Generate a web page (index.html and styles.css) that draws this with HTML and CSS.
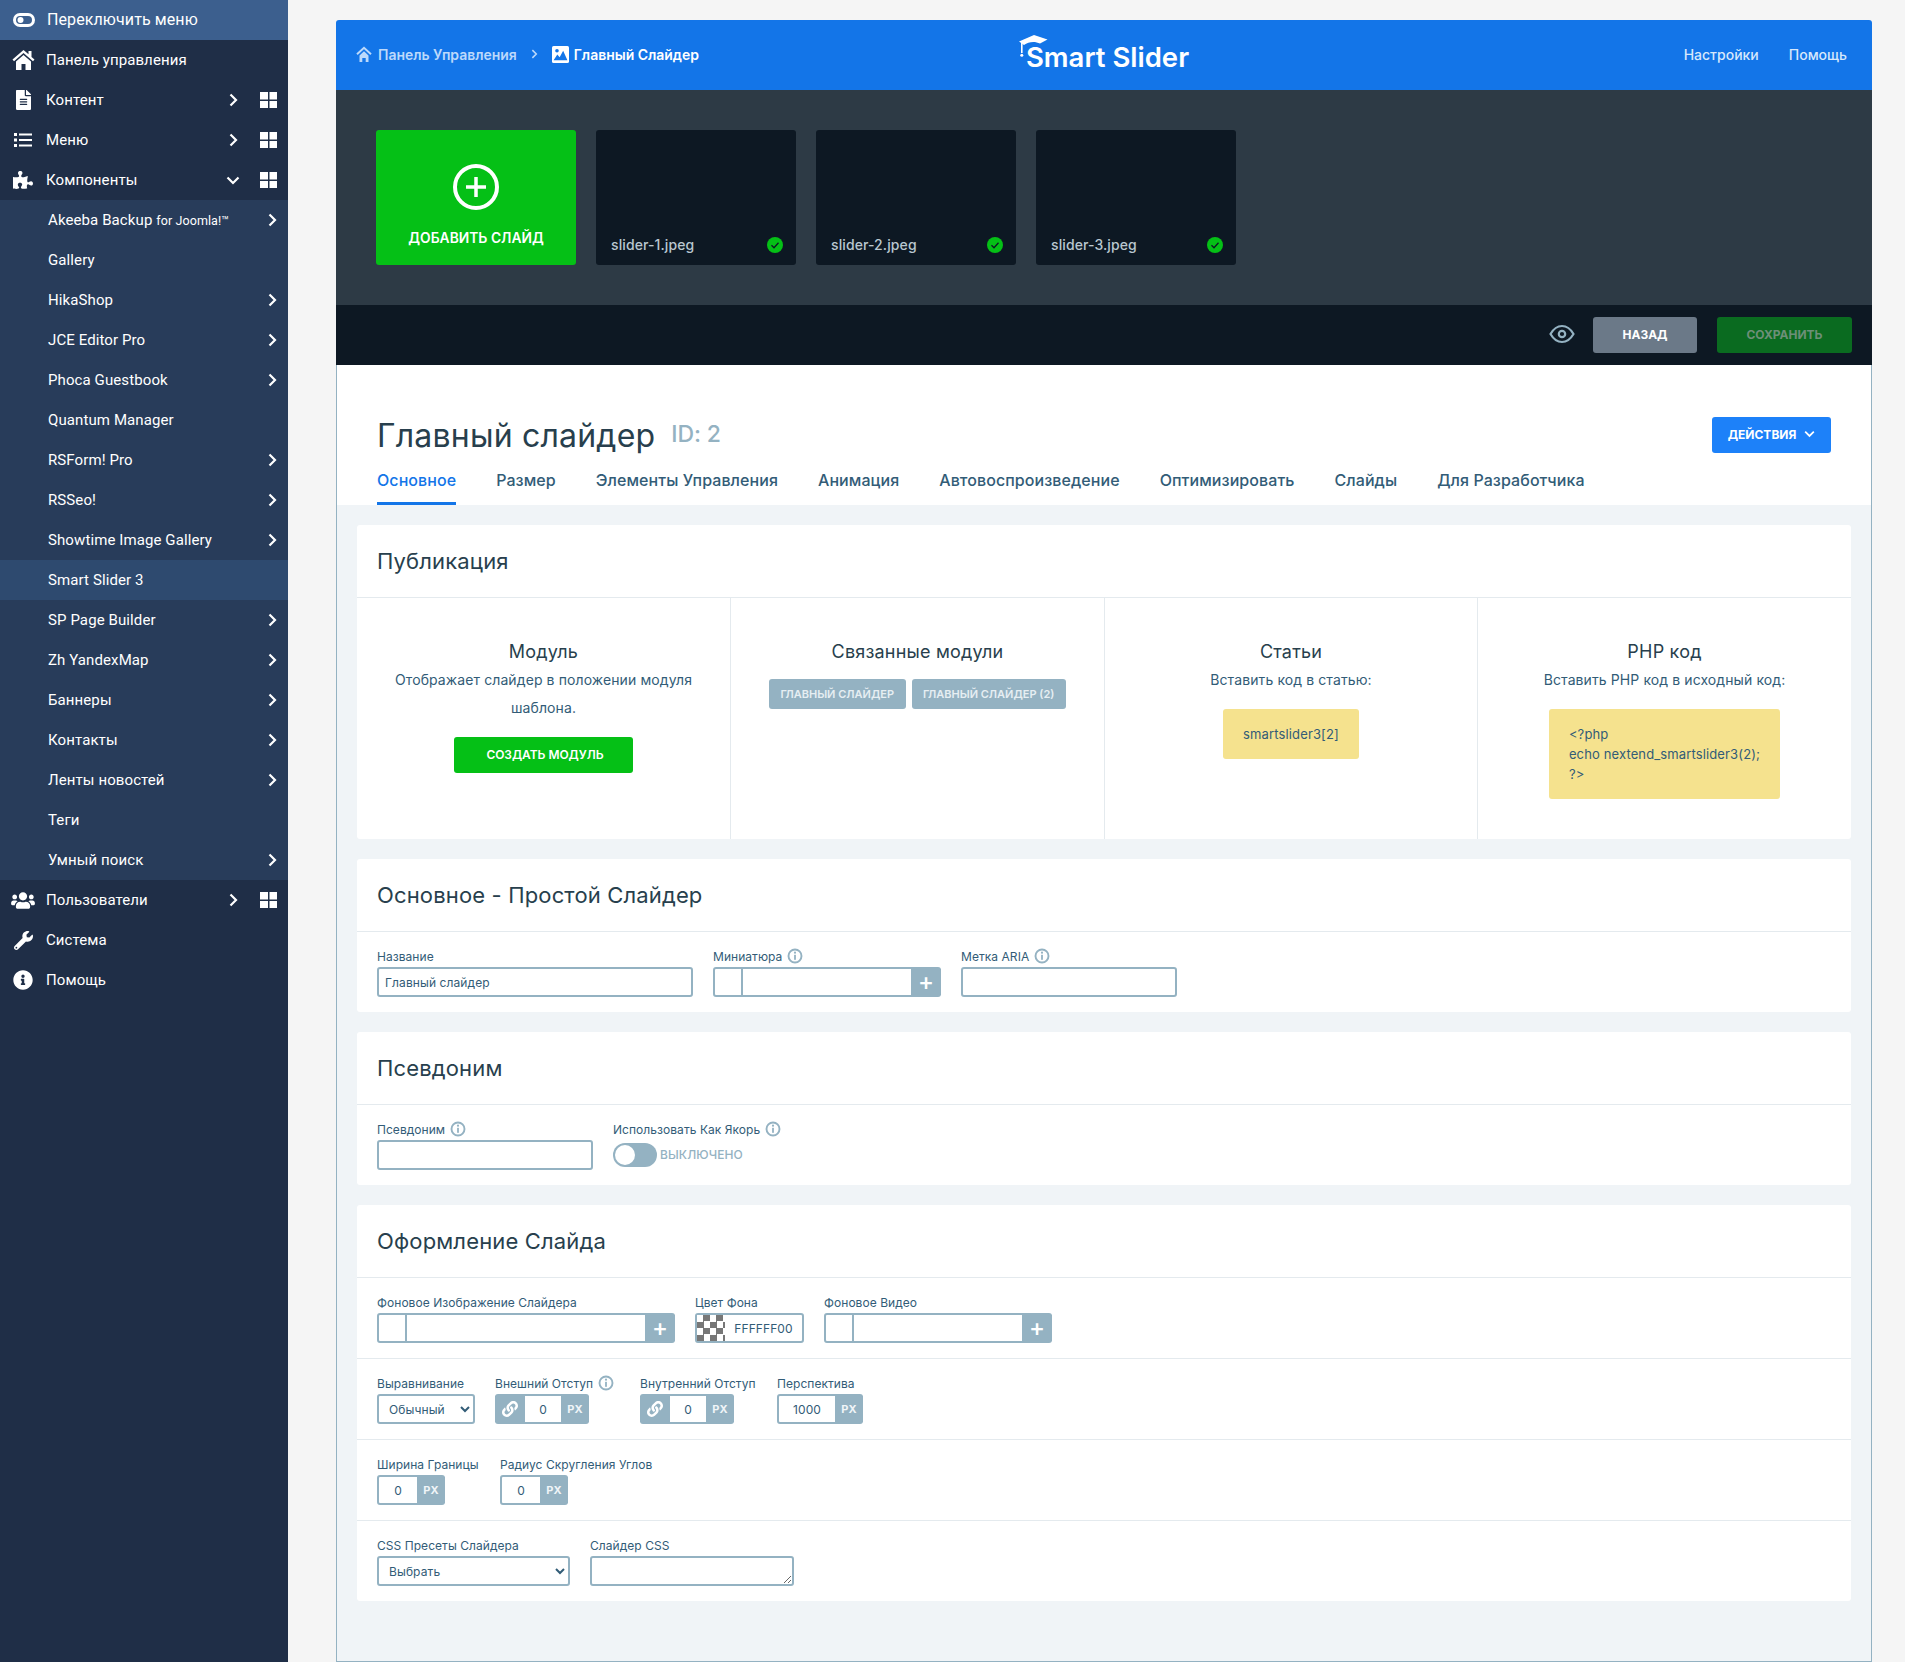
FILE: index.html
```html
<!DOCTYPE html>
<html lang="ru">
<head>
    <meta charset="UTF-8">
    <title>Главный слайдер - Smart Slider</title>
    <link rel="stylesheet" href="styles.css">
</head>
<body>
    <svg class="sprite" xmlns="http://www.w3.org/2000/svg">
        <symbol id="i-home" viewBox="0 0 23 20"><path d="M.5 9.500L11.500 0l5 4.300V1h3v6l3 2.500-1.500 1.700L11.500 3 2 11.200z"/><path d="M4 11.500l7.500-6.500 7.500 6.500V20h-5.500v-6h-4v6H4z"/></symbol>
        <symbol id="i-file" viewBox="0 0 384 512"><path d="M224 136V0H24C10.7 0 0 10.7 0 24v464c0 13.3 10.7 24 24 24h336c13.3 0 24-10.7 24-24V160H248c-13.2 0-24-10.8-24-24zm64 236c0 6.6-5.4 12-12 12H108c-6.6 0-12-5.4-12-12v-8c0-6.6 5.4-12 12-12h168c6.6 0 12 5.4 12 12v8zm0-64c0 6.6-5.4 12-12 12H108c-6.6 0-12-5.4-12-12v-8c0-6.6 5.4-12 12-12h168c6.6 0 12 5.4 12 12v8zm0-72v8c0 6.6-5.4 12-12 12H108c-6.6 0-12-5.4-12-12v-8c0-6.6 5.4-12 12-12h168c6.6 0 12 5.4 12 12zm96-114.1v6.1H256V0h6.1c6.4 0 12.5 2.5 17 7l97.9 98c4.5 4.5 7 10.6 7 16.9z"/></symbol>
        <symbol id="i-list" viewBox="0 0 18 16"><rect x="0" y="1" width="3" height="3"/><rect x="0" y="6.5" width="3" height="3"/><rect x="0" y="12" width="3" height="3"/><rect x="5" y="1.5" width="13" height="2"/><rect x="5" y="7" width="13" height="2"/><rect x="5" y="12.500" width="13" height="2"/></symbol>
        <symbol id="i-puzzle" viewBox="0 0 576 512"><path d="M519.442 288.651c-41.519 0-59.5 31.593-82.058 31.593C377.409 320.244 432 144 432 144s-196.288 80-196.288-3.297c0-35.827 36.288-46.25 36.288-85.985C272 19.216 243.885 0 210.539 0c-34.654 0-66.366 18.891-66.366 56.346 0 41.364 31.711 59.277 31.711 81.75C175.885 207.719 0 166.758 0 166.758v333.237s178.635 41.047 178.635-28.662c0-22.473-40-40.107-40-81.471 0-37.456 29.25-56.346 63.577-56.346 33.673 0 61.788 19.216 61.788 54.717 0 39.735-36.288 50.158-36.288 85.985 0 60.803 129.675 25.73 181.23 25.73 0 0-34.725-120.101 25.827-120.101 35.962 0 46.423 36.152 86.308 36.152C556.712 416 576 387.99 576 354.443c0-34.199-18.962-65.792-56.558-65.792z"/></symbol>
        <symbol id="i-users" viewBox="0 0 640 512"><path d="M96 224c35.3 0 64-28.7 64-64s-28.7-64-64-64-64 28.7-64 64 28.7 64 64 64zm448 0c35.3 0 64-28.7 64-64s-28.7-64-64-64-64 28.7-64 64 28.7 64 64 64zm32 32h-64c-17.6 0-33.5 7.1-45.1 18.6 40.3 22.1 68.9 62 75.1 109.4h66c17.7 0 32-14.3 32-32v-32c0-35.3-28.7-64-64-64zm-256 0c61.9 0 112-50.1 112-112S381.9 32 320 32 208 82.1 208 144s50.1 112 112 112zm76.8 32h-8.3c-20.8 10-43.9 16-68.5 16s-47.6-6-68.5-16h-8.3C179.6 288 128 339.6 128 403.2V432c0 26.5 21.5 48 48 48h288c26.5 0 48-21.5 48-48v-28.8c0-63.6-51.6-115.2-115.2-115.2zm-223.7-13.4C161.5 263.1 145.6 256 128 256H64c-35.3 0-64 28.7-64 64v32c0 17.7 14.3 32 32 32h65.9c6.3-47.4 34.9-87.3 75.2-109.4z"/></symbol>
        <symbol id="i-wrench" viewBox="0 0 512 512"><path d="M507.73 109.1c-2.24-9.03-13.54-12.09-20.12-5.51l-74.36 74.36-67.88-11.31-11.31-67.88 74.36-74.36c6.62-6.62 3.43-17.9-5.66-20.16-47.38-11.74-99.55.91-136.58 37.93-39.64 39.64-50.55 97.1-34.05 147.2L18.74 402.76c-24.99 24.99-24.99 65.51 0 90.5 24.99 24.99 65.51 24.99 90.5 0l213.21-213.21c50.12 16.71 107.47 5.68 147.37-34.22 37.07-37.07 49.7-89.32 37.91-136.73zM64 472c-13.25 0-24-10.75-24-24 0-13.26 10.75-24 24-24s24 10.74 24 24c0 13.25-10.75 24-24 24z"/></symbol>
        <symbol id="i-info" viewBox="0 0 512 512"><path d="M256 8C119.043 8 8 119.083 8 256c0 136.997 111.043 248 248 248s248-111.003 248-248C504 119.083 392.957 8 256 8zm0 110c23.196 0 42 18.804 42 42s-18.804 42-42 42-42-18.804-42-42 18.804-42 42-42zm56 254c0 6.627-5.373 12-12 12h-88c-6.627 0-12-5.373-12-12v-24c0-6.627 5.373-12 12-12h12v-64h-12c-6.627 0-12-5.373-12-12v-24c0-6.627 5.373-12 12-12h64c6.627 0 12 5.373 12 12v100h12c6.627 0 12 5.373 12 12v24z"/></symbol>
        <symbol id="i-grid" viewBox="0 0 17 16"><rect width="8" height="7.500"/><rect x="9.500" width="7.500" height="7.500"/><rect y="9" width="8" height="7"/><rect x="9.500" y="9" width="7.500" height="7"/></symbol>
        <symbol id="i-right" viewBox="0 0 9 14"><path d="M1.500 1.500L7 7l-5.500 5.500" fill="none" stroke="currentColor" stroke-width="2.200"/></symbol>
        <symbol id="i-down" viewBox="0 0 14 9"><path d="M1.500 1.500L7 7l5.500-5.500" fill="none" stroke="currentColor" stroke-width="2.200"/></symbol>
        <symbol id="i-tip" viewBox="0 0 16 16"><circle cx="8" cy="8" r="6.500" fill="none" stroke="currentColor" stroke-width="1.900"/><rect x="7.100" y="6.800" width="1.800" height="5"/><circle cx="8" cy="4.700" r="1.100"/></symbol>
        <symbol id="i-link" viewBox="0 0 512 512"><path d="M326.612 185.391c59.747 59.809 58.927 155.698.36 214.59-.11.12-.24.25-.36.37l-67.2 67.2c-59.27 59.27-155.699 59.262-214.96 0-59.27-59.26-59.27-155.7 0-214.96l37.106-37.106c9.84-9.84 26.786-3.3 27.294 10.606.648 17.722 3.826 35.527 9.69 52.721 1.986 5.822.567 12.262-3.783 16.612l-13.087 13.087c-28.026 28.026-28.905 73.66-1.155 101.96 28.024 28.579 74.086 28.749 102.325.51l67.2-67.19c28.191-28.191 28.073-73.757 0-101.83-3.701-3.694-7.429-6.564-10.341-8.569a16.037 16.037 0 0 1-6.947-12.606c-.396-10.567 3.348-21.456 11.698-29.806l21.054-21.055c5.521-5.521 14.182-6.199 20.584-1.731a152.482 152.482 0 0 1 20.522 17.197zM467.547 44.449c-59.261-59.262-155.69-59.27-214.96 0l-67.2 67.2c-.12.12-.25.25-.36.37-58.566 58.892-59.387 154.781.36 214.59a152.454 152.454 0 0 0 20.521 17.196c6.402 4.468 15.064 3.789 20.584-1.731l21.054-21.055c8.35-8.35 12.094-19.239 11.698-29.806a16.037 16.037 0 0 0-6.947-12.606c-2.912-2.005-6.64-4.875-10.341-8.569-28.073-28.073-28.191-73.639 0-101.83l67.2-67.19c28.239-28.239 74.3-28.069 102.325.51 27.75 28.3 26.872 73.934-1.155 101.96l-13.087 13.087c-4.35 4.35-5.769 10.79-3.783 16.612 5.864 17.194 9.042 34.999 9.69 52.721.509 13.906 17.454 20.446 27.294 10.606l37.106-37.106c59.271-59.259 59.271-155.699.001-214.959z"/></symbol>
    </svg>

    <div class="layout">
        <nav class="sidebar">
            <a class="menu-toggle">
                <span class="menu-icon">
                    <svg class="toggle-icon" viewBox="0 0 22 14"><path fill-rule="evenodd" d="M7 0h8a7 7 0 0 1 0 14H7A7 7 0 0 1 7 0zm0 3a4 4 0 0 0 0 8h8a4 4 0 0 0 0-8H7z"/><circle cx="7.500" cy="7" r="3"/></svg>
                </span>
                Переключить меню
            </a>
            <a class="menu-item"><span class="menu-icon"><svg class="ico-home"><use href="#i-home"/></svg></span><span class="menu-text">Панель управления</span></a>
            <a class="menu-item"><span class="menu-icon"><svg class="ico-file"><use href="#i-file"/></svg></span><span class="menu-text">Контент</span><svg class="arrow"><use href="#i-right"/></svg><svg class="grid"><use href="#i-grid"/></svg></a>
            <a class="menu-item"><span class="menu-icon"><svg class="ico-list"><use href="#i-list"/></svg></span><span class="menu-text">Меню</span><svg class="arrow"><use href="#i-right"/></svg><svg class="grid"><use href="#i-grid"/></svg></a>
            <a class="menu-item"><span class="menu-icon"><svg class="ico-puzzle"><use href="#i-puzzle"/></svg></span><span class="menu-text">Компоненты</span><svg class="arrow-down"><use href="#i-down"/></svg><svg class="grid"><use href="#i-grid"/></svg></a>

            <div class="submenu">
                <a class="sub-item"><span>Akeeba Backup <small>for Joomla!™</small></span><svg class="arrow"><use href="#i-right"/></svg></a>
                <a class="sub-item"><span>Gallery</span></a>
                <a class="sub-item"><span>HikaShop</span><svg class="arrow"><use href="#i-right"/></svg></a>
                <a class="sub-item"><span>JCE Editor Pro</span><svg class="arrow"><use href="#i-right"/></svg></a>
                <a class="sub-item"><span>Phoca Guestbook</span><svg class="arrow"><use href="#i-right"/></svg></a>
                <a class="sub-item"><span>Quantum Manager</span></a>
                <a class="sub-item"><span>RSForm! Pro</span><svg class="arrow"><use href="#i-right"/></svg></a>
                <a class="sub-item"><span>RSSeo!</span><svg class="arrow"><use href="#i-right"/></svg></a>
                <a class="sub-item"><span>Showtime Image Gallery</span><svg class="arrow"><use href="#i-right"/></svg></a>
                <a class="sub-item active"><span>Smart Slider 3</span></a>
                <a class="sub-item"><span>SP Page Builder</span><svg class="arrow"><use href="#i-right"/></svg></a>
                <a class="sub-item"><span>Zh YandexMap</span><svg class="arrow"><use href="#i-right"/></svg></a>
                <a class="sub-item"><span>Баннеры</span><svg class="arrow"><use href="#i-right"/></svg></a>
                <a class="sub-item"><span>Контакты</span><svg class="arrow"><use href="#i-right"/></svg></a>
                <a class="sub-item"><span>Ленты новостей</span><svg class="arrow"><use href="#i-right"/></svg></a>
                <a class="sub-item"><span>Теги</span></a>
                <a class="sub-item"><span>Умный поиск</span><svg class="arrow"><use href="#i-right"/></svg></a>
            </div>

            <a class="menu-item"><span class="menu-icon"><svg class="ico-users"><use href="#i-users"/></svg></span><span class="menu-text">Пользователи</span><svg class="arrow"><use href="#i-right"/></svg><svg class="grid"><use href="#i-grid"/></svg></a>
            <a class="menu-item"><span class="menu-icon"><svg class="ico-wrench"><use href="#i-wrench"/></svg></span><span class="menu-text">Система</span></a>
            <a class="menu-item"><span class="menu-icon"><svg class="ico-info"><use href="#i-info"/></svg></span><span class="menu-text">Помощь</span></a>
        </nav>

        <main class="main">
            <header class="topbar">
                <div class="breadcrumb">
                    <a class="crumb"><svg class="crumb-home" viewBox="0 0 16 16"><path d="M1 8.300L8 1.800l7 6.500" fill="none" stroke="currentColor" stroke-width="2"/><path d="M3.500 9.500L8 5.300l4.500 4.200V16H9.700v-4H6.300v4H3.500z"/></svg>Панель Управления</a>
                    <svg class="crumb-sep"><use href="#i-right"/></svg>
                    <a class="crumb current"><svg class="crumb-image" viewBox="0 0 16 16"><rect width="16" height="16" rx="1.500" fill="#fff"/><circle cx="4.700" cy="4.500" r="1.700" fill="#1375e8"/><path d="M1.500 13.500L5 8l2.200 2.500L10.500 4.500l4 9z" fill="#1375e8"/></svg>Главный Слайдер</a>
                </div>
                <div class="logo">
                    <svg class="logo-cap" viewBox="0 0 29 23"><path d="M0 6.500L15 0l13.500 4.500-7.500 4C16 6 9.500 6.500 5 10z"/><rect x="2" y="8" width="1.600" height="10"/><circle cx="2.800" cy="20.200" r="1.500"/></svg>
                    <span>Smart Slider</span>
                </div>
                <div class="top-links">
                    <a>Настройки</a>
                    <a>Помощь</a>
                </div>
            </header>

            <section class="slides-bar">
                <a class="slide-add">
                    <svg class="plus-circle" viewBox="0 0 46 46"><circle cx="23" cy="23" r="21" fill="none" stroke="currentColor" stroke-width="4"/><path d="M13 23h20M23 13v20" fill="none" stroke="currentColor" stroke-width="3.500"/></svg>
                    <span>Добавить слайд</span>
                </a>
                <div class="slide"><span>slider-1.jpeg</span><svg class="check" viewBox="0 0 16 16"><circle cx="8" cy="8" r="8"/><path d="M4.500 8.200l2.500 2.500 4.500-5" fill="none" stroke="#0d1823" stroke-width="1.300"/></svg></div>
                <div class="slide"><span>slider-2.jpeg</span><svg class="check" viewBox="0 0 16 16"><circle cx="8" cy="8" r="8"/><path d="M4.500 8.200l2.500 2.500 4.500-5" fill="none" stroke="#0d1823" stroke-width="1.300"/></svg></div>
                <div class="slide"><span>slider-3.jpeg</span><svg class="check" viewBox="0 0 16 16"><circle cx="8" cy="8" r="8"/><path d="M4.500 8.200l2.500 2.500 4.500-5" fill="none" stroke="#0d1823" stroke-width="1.300"/></svg></div>
            </section>

            <div class="action-bar">
                <svg class="eye" viewBox="0 0 26 20"><path d="M1.500 10C4.500 4.800 8.500 2 13 2s8.500 2.800 11.500 8c-3 5.200-7 8-11.500 8S4.500 15.200 1.500 10z" fill="none" stroke="currentColor" stroke-width="2.200"/><circle cx="13" cy="10" r="3.200" fill="none" stroke="currentColor" stroke-width="2.200"/></svg>
                <a class="btn btn-back">Назад</a>
                <a class="btn btn-save">Сохранить</a>
            </div>

            <div class="content">
                <div class="page-head">
                    <div class="title-row">
                        <h1>Главный слайдер <span class="slider-id">ID: 2</span></h1>
                        <a class="btn btn-actions">Действия <svg><use href="#i-down"/></svg></a>
                    </div>
                    <div class="tabs">
                        <a class="tab active">Основное</a>
                        <a class="tab">Размер</a>
                        <a class="tab">Элементы Управления</a>
                        <a class="tab">Анимация</a>
                        <a class="tab">Автовоспроизведение</a>
                        <a class="tab">Оптимизировать</a>
                        <a class="tab">Слайды</a>
                        <a class="tab">Для Разработчика</a>
                    </div>
                </div>

                <div class="panels">
                    <section class="panel">
                        <h2 class="panel-title">Публикация</h2>
                        <div class="publish">
                            <div class="publish-col">
                                <h3>Модуль</h3>
                                <p>Отображает слайдер в положении модуля шаблона.</p>
                                <a class="btn btn-green">Создать модуль</a>
                            </div>
                            <div class="publish-col">
                                <h3>Связанные модули</h3>
                                <div class="tags">
                                    <a class="tag">Главный слайдер</a>
                                    <a class="tag">Главный слайдер (2)</a>
                                </div>
                            </div>
                            <div class="publish-col">
                                <h3>Статьи</h3>
                                <p class="one-line">Вставить код в статью:</p>
                                <div class="code">smartslider3[2]</div>
                            </div>
                            <div class="publish-col">
                                <h3>PHP код</h3>
                                <p class="one-line">Вставить PHP код в исходный код:</p>
                                <div class="code">&lt;?php<br>echo nextend_smartslider3(2);<br>?&gt;</div>
                            </div>
                        </div>
                    </section>

                    <section class="panel">
                        <h2 class="panel-title">Основное - Простой Слайдер</h2>
                        <div class="form-row">
                            <div class="field w-316">
                                <label>Название</label>
                                <input class="input" type="text" value="Главный слайдер">
                            </div>
                            <div class="field w-228">
                                <label>Миниатюра <svg class="tip"><use href="#i-tip"/></svg></label>
                                <div class="picker"><span class="picker-thumb"></span><span class="picker-path"></span><span class="picker-add">+</span></div>
                            </div>
                            <div class="field w-216">
                                <label>Метка ARIA <svg class="tip"><use href="#i-tip"/></svg></label>
                                <input class="input" type="text">
                            </div>
                        </div>
                    </section>

                    <section class="panel">
                        <h2 class="panel-title">Псевдоним</h2>
                        <div class="form-row">
                            <div class="field w-216">
                                <label>Псевдоним <svg class="tip"><use href="#i-tip"/></svg></label>
                                <input class="input" type="text">
                            </div>
                            <div class="field">
                                <label>Использовать Как Якорь <svg class="tip"><use href="#i-tip"/></svg></label>
                                <div class="switch-line"><span class="switch"></span><span class="switch-text">Выключено</span></div>
                            </div>
                        </div>
                    </section>

                    <section class="panel">
                        <h2 class="panel-title">Оформление Слайда</h2>
                        <div class="form-row">
                            <div class="field w-298">
                                <label>Фоновое Изображение Слайдера</label>
                                <div class="picker"><span class="picker-thumb"></span><span class="picker-path"></span><span class="picker-add">+</span></div>
                            </div>
                            <div class="field w-109">
                                <label>Цвет Фона</label>
                                <div class="color"><span class="color-swatch"></span><span class="color-value">FFFFFF00</span></div>
                            </div>
                            <div class="field w-228">
                                <label>Фоновое Видео</label>
                                <div class="picker"><span class="picker-thumb"></span><span class="picker-path"></span><span class="picker-add">+</span></div>
                            </div>
                        </div>
                        <div class="form-row">
                            <div class="field w-98">
                                <label>Выравнивание</label>
                                <select class="input select"><option>Обычный</option></select>
                            </div>
                            <div class="field w-94">
                                <label class="nowrap">Внешний Отступ <svg class="tip"><use href="#i-tip"/></svg></label>
                                <div class="unit-box"><span class="unit-link"><svg><use href="#i-link"/></svg></span><span class="unit-value">0</span><span class="unit-name">px</span></div>
                            </div>
                            <div class="field w-94 after-tip">
                                <label class="nowrap">Внутренний Отступ</label>
                                <div class="unit-box"><span class="unit-link"><svg><use href="#i-link"/></svg></span><span class="unit-value">0</span><span class="unit-name">px</span></div>
                            </div>
                            <div class="field w-86 after-label">
                                <label>Перспектива</label>
                                <div class="unit-box"><span class="unit-value">1000</span><span class="unit-name">px</span></div>
                            </div>
                        </div>
                        <div class="form-row">
                            <div class="field w-68 after-wide">
                                <label class="nowrap">Ширина Границы</label>
                                <div class="unit-box"><span class="unit-value">0</span><span class="unit-name">px</span></div>
                            </div>
                            <div class="field w-68">
                                <label class="nowrap">Радиус Скругления Углов</label>
                                <div class="unit-box"><span class="unit-value">0</span><span class="unit-name">px</span></div>
                            </div>
                        </div>
                        <div class="form-row">
                            <div class="field w-193">
                                <label>CSS Пресеты Слайдера</label>
                                <select class="input select"><option>Выбрать</option></select>
                            </div>
                            <div class="field w-204">
                                <label>Слайдер CSS</label>
                                <textarea class="input area"></textarea>
                            </div>
                        </div>
                    </section>
                </div>
            </div>
        </main>
    </div>
</body>
</html>
```

FILE: styles.css
```css
* {
    box-sizing: border-box;
}
body {
    margin: 0;
    background-color: #f5f5f5;
    font-family: Inter, "Liberation Sans", sans-serif;
    color: #283f4d;
    letter-spacing: 0.1px;
}
a {
    text-decoration: none;
    color: inherit;
}
.sprite {
    display: none;
}
.layout {
    display: flex;
    min-height: 1662px;
}

/* sidebar */
.sidebar {
    width: 288px;
    flex-shrink: 0;
    background-color: #1f2e47;
    color: #fff;
    font-family: Roboto, "Liberation Sans", sans-serif;
    font-size: 15px;
}
.sidebar svg {
    fill: currentColor;
}
.menu-toggle,
.menu-item,
.sub-item {
    display: flex;
    align-items: center;
    height: 40px;
}
.menu-toggle {
    padding-bottom: 1px;
    background-color: #3c5f8e;
    font-size: 16px;
}
.menu-icon {
    display: flex;
    justify-content: center;
    width: 46px;
    flex-shrink: 0;
}
.menu-toggle .menu-icon {
    width: 47px;
}
.toggle-icon {
    width: 22px;
    height: 14px;
}
.ico-home { width: 23px; height: 20px; }
.ico-file { width: 15px; height: 20px; }
.ico-list { width: 18px; height: 16px; }
.ico-puzzle { width: 20px; height: 18px; }
.ico-users { width: 24px; height: 19px; }
.ico-wrench { width: 19px; height: 19px; }
.ico-info { width: 20px; height: 20px; }
.menu-text {
    flex: 1;
}
.menu-item .arrow {
    width: 9px;
    height: 14px;
    margin-right: 22px;
}
.arrow-down {
    width: 14px;
    height: 9px;
    margin-right: 20px;
}
.grid {
    width: 17px;
    height: 16px;
    margin-right: 11px;
}
.submenu {
    background-color: #283c5a;
}
.sub-item {
    justify-content: space-between;
    padding: 0 11px 0 48px;
}
.sub-item .arrow {
    width: 9px;
    height: 14px;
}
.sub-item small {
    font-size: 12.500px;
}
.sub-item.active {
    background-color: #2e4a6f;
}

/* top of the slider page */
.main {
    width: 1536px;
    margin: 20px 33px 0 48px;
    display: flex;
    flex-direction: column;
}
.topbar {
    display: grid;
    grid-template-columns: 1fr auto 1fr;
    align-items: center;
    height: 70px;
    padding: 0 25px 0 20px;
    background-color: #1375e8;
    border-radius: 3px 3px 0 0;
    color: #fff;
    font-size: 14px;
    font-weight: 500;
    letter-spacing: 0;
}
.breadcrumb,
.crumb {
    display: flex;
    align-items: center;
}
.breadcrumb {
    padding-bottom: 2px;
}
.crumb {
    color: #bcd9fb;
    font-weight: 600;
    letter-spacing: -0.03px;
}
.crumb.current {
    color: #fff;
}
.crumb svg {
    fill: currentColor;
}
.crumb-home {
    width: 16px;
    height: 16px;
    margin-right: 6px;
}
.crumb-image {
    width: 17px;
    height: 17px;
    margin-right: 5px;
}
.crumb-sep {
    width: 7px;
    height: 10px;
    margin: 0 14px;
    color: #bcd9fb;
}
.logo {
    position: relative;
    margin: 4px 0 0 5px;
    padding-left: 7px;
    font-size: 27.500px;
    font-weight: 600;
    line-height: 36px;
}
.logo-cap {
    position: absolute;
    left: 0;
    top: -4px;
    width: 29px;
    height: 23px;
    fill: #fff;
}
.top-links {
    justify-self: end;
    display: flex;
    gap: 30px;
    padding-bottom: 2px;
    color: #d7e8fc;
}
.slides-bar {
    display: flex;
    gap: 20px;
    height: 215px;
    padding: 40px;
    background-color: #2d3a45;
}
.slide-add,
.slide {
    width: 200px;
    height: 135px;
    border-radius: 3px;
}
.slide-add {
    display: flex;
    flex-direction: column;
    align-items: center;
    padding-top: 34px;
    background-color: #05c016;
    color: #fff;
    font-size: 13.800px;
    font-weight: 600;
    letter-spacing: 0;
    text-transform: uppercase;
}
.plus-circle {
    width: 46px;
    height: 46px;
    margin-bottom: 20px;
}
.slide {
    display: flex;
    justify-content: space-between;
    align-items: flex-end;
    padding: 0 13px 12px 15px;
    background-color: #0d1823;
    color: #b9c7d0;
    font-size: 14px;
    font-weight: 500;
}
.check {
    width: 16px;
    height: 16px;
    fill: #05c016;
}
.action-bar {
    display: flex;
    justify-content: flex-end;
    align-items: center;
    gap: 20px;
    height: 60px;
    padding-right: 20px;
    background-color: #0d1823;
}
.eye {
    width: 26px;
    height: 20px;
    color: #94b2c2;
    margin: 0 -2px 2px 0;
}
.btn {
    display: flex;
    justify-content: center;
    align-items: center;
    height: 36px;
    padding-bottom: 2px;
    border-radius: 3px;
    font-size: 12px;
    font-weight: 700;
    letter-spacing: 0;
    text-transform: uppercase;
}
.btn-back {
    width: 104px;
    background-color: #6b7988;
    color: #fff;
}
.btn-save {
    width: 135px;
    background-color: #0a6b20;
    color: #6d8f78;
}
.btn-actions {
    width: 119px;
    gap: 8px;
    background-color: #1d81f9;
    color: #fff;
}
.btn-actions svg {
    width: 11px;
    height: 8px;
}
.btn-green {
    width: 179px;
    margin: 15px auto 0;
    padding-left: 3px;
    background-color: #05c016;
    color: #fff;
    font-weight: 600;
    letter-spacing: -0.05px;
}

/* white part under the bars */
.content {
    flex: 1;
    background-color: #f0f4f7;
    border: 1px solid #94b2c2;
    border-top: 0;
}
.page-head {
    height: 140px;
    padding: 50px 40px 0;
    background-color: #fff;
}
.title-row {
    display: flex;
    justify-content: space-between;
    align-items: center;
    height: 40px;
}
h1 {
    display: flex;
    align-items: center;
    margin: 0;
    font-size: 32px;
    font-weight: 400;
    letter-spacing: 0.2px;
    color: #283f4d;
}
.slider-id {
    margin: 0 0 3px 16px;
    font-size: 23px;
    font-weight: 500;
    letter-spacing: -0.1px;
    color: #94b2c2;
}
.tabs {
    display: flex;
    gap: 40px;
}
.tab {
    height: 50px;
    line-height: 50px;
    font-size: 16px;
    font-weight: 500;
    letter-spacing: 0.07px;
    color: #325c77;
}
.tab.active {
    color: #1375e8;
    border-bottom: 3px solid #1375e8;
}
.panels {
    display: flex;
    flex-direction: column;
    gap: 20px;
    padding: 20px 20px 60px;
}
.panel {
    background-color: #fff;
    border-radius: 3px;
}
.panel-title {
    height: 73px;
    margin: 0;
    padding: 0 20px;
    line-height: 72px;
    font-size: 22px;
    font-weight: 400;
    letter-spacing: 0.15px;
    color: #283f4d;
    border-bottom: 1px solid #e4eaee;
}
.publish {
    display: grid;
    grid-template-columns: 373px 374px 373px 374px;
    height: 241px;
}
.publish-col {
    padding: 40px 20px 0;
    text-align: center;
    border-left: 1px solid #e4eaee;
}
.publish-col:first-child {
    border-left: 0;
}
.publish-col h3 {
    margin: 0;
    font-size: 18px;
    font-weight: 400;
    line-height: 28px;
    letter-spacing: 0.2px;
    color: #283f4d;
}
.publish-col p {
    margin: 0;
    font-size: 14px;
    line-height: 28px;
    color: #325c77;
}
.tags {
    display: flex;
    justify-content: center;
    gap: 6px;
    margin-top: 13px;
}
.tag {
    padding: 0 11.500px;
    height: 30px;
    line-height: 30px;
    border-radius: 3px;
    background-color: #94b2c2;
    color: #e6eef2;
    font-size: 11px;
    font-weight: 600;
    letter-spacing: 0;
    text-transform: uppercase;
}
.code {
    display: inline-block;
    margin-top: 15px;
    padding: 15px 20px;
    border-radius: 3px;
    background-color: #f5e28e;
    color: #325c77;
    font-size: 13px;
    letter-spacing: 0.13px;
    line-height: 20px;
    text-align: left;
}
.form-row {
    display: flex;
    gap: 20px;
    height: 81px;
    padding: 15px 20px;
    border-bottom: 1px solid #e4eaee;
}
.form-row:last-child {
    height: 80px;
    border-bottom: 0;
}
.field {
    display: flex;
    flex-direction: column;
}
.field label {
    display: flex;
    align-items: center;
    gap: 5px;
    height: 20px;
    padding-bottom: 2px;
    font-size: 12px;
    letter-spacing: 0.05px;
    color: #325c77;
}
.nowrap {
    white-space: nowrap;
}
.w-316 { width: 316px; }
.w-298 { width: 298px; }
.w-228 { width: 228px; }
.w-216 { width: 216px; }
.w-204 { width: 204px; }
.w-193 { width: 193px; }
.w-109 { width: 109px; }
.w-98 { width: 98px; }
.w-94 { width: 94px; }
.w-86 { width: 86px; }
.w-68 { width: 68px; }
.after-tip { margin-left: 31px; }
.after-label { margin-left: 23px; }
.after-wide { margin-right: 35px; }
.tip {
    width: 16px;
    height: 16px;
    color: #94b2c2;
    fill: currentColor;
    flex-shrink: 0;
}
.input {
    width: 100%;
    height: 30px;
    padding: 0 6px;
    border: 2px solid #94b2c2;
    border-radius: 3px;
    background-color: #fff;
    font-family: inherit;
    font-size: 12px;
    letter-spacing: 0.1px;
    color: #325c77;
    outline: none;
}
.area {
    display: block;
    resize: both;
}
.picker,
.color,
.unit-box {
    display: flex;
    height: 30px;
    border: 2px solid #94b2c2;
    border-radius: 3px;
    background-color: #fff;
}
.picker-thumb {
    width: 28px;
    border-right: 2px solid #94b2c2;
}
.picker-path {
    flex: 1;
}
.picker-add {
    width: 30px;
    margin-right: -2px;
    background-color: #94b2c2;
    color: #fff;
    font-size: 24px;
    font-weight: 500;
    line-height: 25px;
    text-align: center;
}
.color-swatch {
    width: 28px;
    background: repeating-conic-gradient(#777 0 25%, #fff 0 50%) 0 0 / 13px 13px;
}
.color-value {
    flex: 1;
    text-align: center;
    font-size: 12px;
    line-height: 27px;
    color: #325c77;
}
.switch-line {
    display: flex;
    align-items: center;
    gap: 3px;
    height: 24px;
    margin-top: 3px;
}
.switch {
    position: relative;
    width: 44px;
    height: 24px;
    border-radius: 12px;
    background-color: #94b2c2;
}
.switch::before {
    content: "";
    position: absolute;
    left: 2px;
    top: 2px;
    width: 20px;
    height: 20px;
    border-radius: 50%;
    background-color: #fff;
}
.switch-text {
    padding-bottom: 2px;
    font-size: 12px;
    font-weight: 500;
    color: #94b2c2;
    text-transform: uppercase;
}
.unit-link {
    display: flex;
    justify-content: center;
    align-items: center;
    width: 30px;
    margin-left: -2px;
    background-color: #94b2c2;
    color: #fff;
}
.unit-link svg {
    width: 16px;
    height: 16px;
    fill: currentColor;
}
.unit-value {
    flex: 1;
    text-align: center;
    font-size: 12px;
    line-height: 27px;
    color: #325c77;
}
.unit-name {
    width: 28px;
    margin-right: -2px;
    background-color: #94b2c2;
    color: #f0f5f8;
    font-size: 11px;
    font-weight: 700;
    line-height: 26px;
    text-align: center;
    text-transform: uppercase;
}
```
